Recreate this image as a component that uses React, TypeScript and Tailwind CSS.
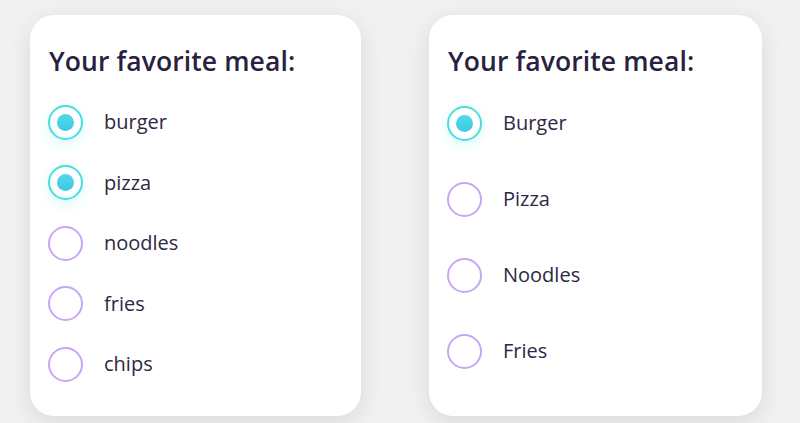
import React from "react";

type Item = { label: string; checked: boolean };

function Radio({ checked }: { checked: boolean }) {
  if (checked) {
    return (
      <div className="flex h-[35px] w-[35px] shrink-0 items-center justify-center rounded-full border-[2.5px] border-[#45e0de] bg-white shadow-[0_4px_12px_rgba(69,214,230,0.18)]">
        <div className="h-[17px] w-[17px] rounded-full bg-gradient-to-b from-[#52dbe8] to-[#3cc8e4]" />
      </div>
    );
  }
  return <div className="h-[35px] w-[35px] shrink-0 rounded-full border-2 border-[#c8a6f6] bg-white" />;
}

function Card({ items, rowH, listMt, width }: { items: Item[]; rowH: string; listMt: string; width: string }) {
  return (
    <div className={`${width} h-[401px] rounded-[24px] bg-white pl-[18px] pt-[28px] shadow-[0_6px_24px_rgba(0,0,0,0.1)]`}>
      <h2 className="pl-[1px] text-[26.5px] font-semibold leading-[36px] tracking-[0.1px] text-[#2a2142]">Your favorite meal:</h2>
      <div className={`flex flex-col ${listMt}`}>
        {items.map((it) => (
          <label key={it.label} className={`flex ${rowH} items-center gap-[21px]`}>
            <Radio checked={it.checked} />
            <span className="text-[20px] leading-none text-[#2e2842]">{it.label}</span>
          </label>
        ))}
      </div>
    </div>
  );
}

export default function App() {
  return (
    <div
      className="flex h-[423px] w-[800px] gap-[68px] bg-[#f1f1f1] pl-[30px] pt-[15px]"
      style={{ fontFamily: '"Open Sans", "Noto Sans", sans-serif' }}
    >
      <Card
        width="w-[331px]"
        rowH="h-[60.5px]"
        listMt="mt-[12.75px]"
        items={[
          { label: "burger", checked: true },
          { label: "pizza", checked: true },
          { label: "noodles", checked: false },
          { label: "fries", checked: false },
          { label: "chips", checked: false },
        ]}
      />
      <Card
        width="w-[333px]"
        rowH="h-[76px]"
        listMt="mt-[6px]"
        items={[
          { label: "Burger", checked: true },
          { label: "Pizza", checked: false },
          { label: "Noodles", checked: false },
          { label: "Fries", checked: false },
        ]}
      />
    </div>
  );
}
